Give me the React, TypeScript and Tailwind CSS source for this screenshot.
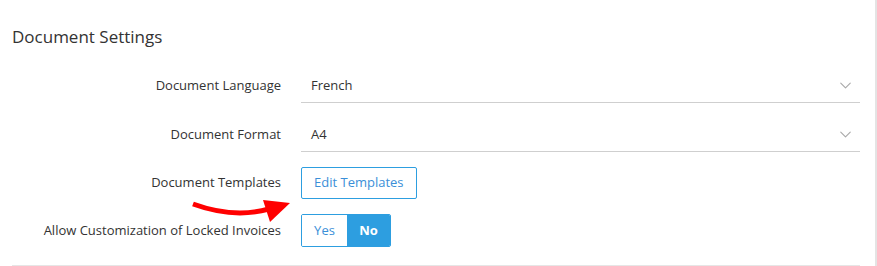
import { ChevronDown } from 'lucide-react';

const font = { fontFamily: '"Open Sans", "Liberation Sans", sans-serif' };

function SelectRow({ label, value }: { label: string; value: string }) {
  return (
    <div className="flex items-center">
      <div className="w-[269px] text-right text-[13px] text-[#333]">{label}</div>
      <div className="ml-[20px] flex h-[34px] flex-1 items-center justify-between border-b border-[#cfcfcf] pl-[10px] pr-[5px]">
        <span className="text-[13px] text-[#333]">{value}</span>
        <ChevronDown size={19} strokeWidth={1.4} className="text-[#a9a9a9]" />
      </div>
    </div>
  );
}

export default function App() {
  return (
    <div style={font} className="relative h-[266px] w-[877px] bg-white">
      <div className="h-full w-[877px] border-r-2 border-[#e4e4e4]">
        <div className="pl-3 pr-[15px]">
          <h2 className="pt-[26px] text-[17px] leading-[21px] text-[#333]">Document Settings</h2>
          <div className="mt-[22px] flex flex-col gap-[15px] border-b border-[#e6e6e6] pb-[18px]">
            <SelectRow label="Document Language" value="French" />
            <SelectRow label="Document Format" value="A4" />
            <div className="flex items-center">
              <div className="w-[269px] text-right text-[13px] text-[#333]">Document Templates</div>
              <button className="ml-[20px] h-[32px] rounded-[2px] border border-[#2d9ee0] px-[12px] text-[13px] text-[#3b8fd8]">
                Edit Templates
              </button>
            </div>
            <div className="flex items-center">
              <div className="w-[269px] text-right text-[13px] text-[#333]">Allow Customization of Locked Invoices</div>
              <div className="ml-[20px] flex h-[33px] overflow-hidden rounded-[2px] border border-[#2d9ee0]">
                <span className="flex w-[45px] items-center justify-center bg-white text-[13px] text-[#3b8fd8]">Yes</span>
                <span className="flex w-[43px] items-center justify-center bg-[#2d9ee0] text-[13px] font-bold text-white">No</span>
              </div>
            </div>
          </div>
        </div>
      </div>
      <svg className="absolute left-[185px] top-[190px]" width="115" height="35" viewBox="0 0 115 35">
        <path d="M8 14 C 30 22, 55 27, 84 19" fill="none" stroke="#ff0000" strokeWidth="5" />
        <polygon points="78,10 105,13 85,32" fill="#ff0000" />
      </svg>
    </div>
  );
}
